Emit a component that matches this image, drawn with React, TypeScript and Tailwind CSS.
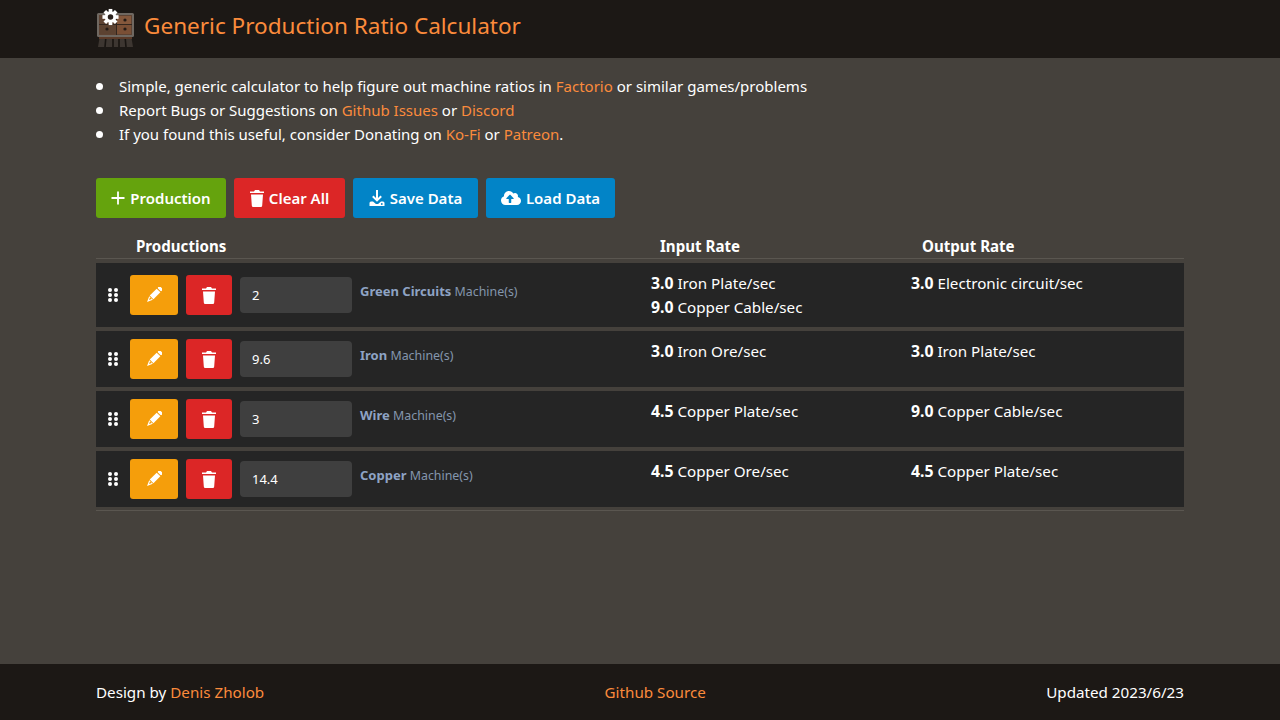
import { FaCloudUploadAlt } from "react-icons/fa";

const rows = [
  {
    name: "Green Circuits",
    count: "2",
    inputs: [["3.0", "Iron Plate"], ["9.0", "Copper Cable"]],
    outputs: [["3.0", "Electronic circuit"]],
  },
  { name: "Iron", count: "9.6", inputs: [["3.0", "Iron Ore"]], outputs: [["3.0", "Iron Plate"]] },
  { name: "Wire", count: "3", inputs: [["4.5", "Copper Plate"]], outputs: [["9.0", "Copper Cable"]] },
  { name: "Copper", count: "14.4", inputs: [["4.5", "Copper Ore"]], outputs: [["4.5", "Copper Plate"]] },
];

function Link({ children }: { children: string }) {
  return <a className="text-[#fb8b3c]">{children}</a>;
}

// rusty machine with a gear in its corner
function Logo() {
  const teeth = [0, 45, 90, 135];
  return (
    <svg width="39" height="37" viewBox="0 0 39 37" className="block overflow-visible">
      <path d="M4 24h31l2 12H2z" fill="#3d3631" />
      <path d="M10 25L9 36M17 25v11M23 25v11M29 25l1 11" stroke="#181411" strokeWidth="1.6" />
      <path d="M3 27h33" stroke="#5b3a28" strokeWidth="2" />
      <rect x="1" y="2" width="37" height="24" rx="1.5" fill="#6f6861" />
      <rect x="3" y="4" width="33" height="20" fill="#5e4333" />
      <rect x="21" y="5" width="14" height="8" fill="#85583c" />
      <rect x="4" y="14" width="16" height="9" fill="#5c4231" />
      <rect x="21" y="14" width="14" height="9" fill="#7a4f35" />
      <path d="M3 13.5h33M20.5 4v20" stroke="#33261e" strokeWidth="1" />
      <circle cx="11" cy="18" r="1.6" fill="#241b16" />
      <circle cx="29" cy="18" r="1.6" fill="#241b16" />
      <circle cx="29" cy="9" r="1.6" fill="#241b16" />
      <g transform="translate(14.5 6) scale(1.15)">
        {teeth.map((deg) => (
          <rect key={deg} x="-1.6" y="-7" width="3.2" height="14" fill="#fff" transform={`rotate(${deg})`} />
        ))}
        <circle r="5" fill="#fff" />
        <circle r="2.4" fill="#2a211c" />
      </g>
    </svg>
  );
}

function TrashIcon() {
  return (
    <svg width="14" height="17" viewBox="0 0 14 17" fill="currentColor">
      <path d="M5 0h4l1 1.5h4V3H0V1.5h4z" />
      <path d="M1 4.5h12l-.8 11a1.5 1.5 0 0 1-1.5 1.5H3.3a1.5 1.5 0 0 1-1.5-1.5z" />
    </svg>
  );
}

function PlusIcon() {
  return (
    <svg width="14" height="14" viewBox="0 0 14 14" stroke="currentColor" strokeWidth="1.8">
      <path d="M7 0.5v13M0.5 7h13" />
    </svg>
  );
}

function SaveIcon() {
  return (
    <svg width="16" height="16" viewBox="0 0 16 16" fill="none" stroke="currentColor" strokeWidth="2">
      <path d="M8 0v10M3.8 6.2L8 10.4L12.2 6.2" />
      <path d="M0.5 13a1.5 1.5 0 0 1 1.5-1.5h2l3 2.5h2l3-2.5h2a1.5 1.5 0 0 1 1.5 1.5v3H0.5z" fill="currentColor" stroke="none" />
      <circle cx="12.8" cy="14" r="0.9" fill="#0284c7" stroke="none" />
    </svg>
  );
}

function PencilIcon() {
  return (
    <svg width="16" height="16" viewBox="0 0 16 16" fill="currentColor">
      <g transform="rotate(45 8 8)">
        <rect x="5.4" y="-2.4" width="5.2" height="3" rx="1.2" />
        <path d="M5.4 1.6h5.2v9.8H5.4z" />
        <path d="M5.4 12.2h5.2L8 17.8z" />
        <path d="M6.8 12.4h2.4L8 15z" fill="#f59e0b" />
      </g>
    </svg>
  );
}

function GripIcon() {
  return (
    <svg width="10" height="14" viewBox="0 0 10 14" fill="currentColor" className="shrink-0">
      {[2, 7, 12].map((y) => (
        <g key={y}>
          <circle cx="2" cy={y} r="2" />
          <circle cx="8" cy={y} r="2" />
        </g>
      ))}
    </svg>
  );
}

function Bullet({ children }: { children: React.ReactNode }) {
  return (
    <li className="flex items-center">
      <span className="mr-4 h-[7px] w-[7px] shrink-0 rounded-full bg-white" />
      <span>{children}</span>
    </li>
  );
}

function Rate({ items }: { items: string[][] }) {
  return (
    <div className="w-[260px] shrink-0">
      {items.map(([value, label]) => (
        <div key={label} className="text-[15.2px] leading-6 text-white">
          <b className="text-[15.8px] font-bold">{value}</b> {label}/sec
        </div>
      ))}
    </div>
  );
}

export default function App() {
  return (
    <div className="flex min-h-screen flex-col bg-[#45413c] font-['Noto_Sans',sans-serif] text-[15px] text-white">
      <header className="flex h-[58px] items-center bg-[#1c1815] px-24">
        <Logo />
        <h1 className="mb-[6px] ml-[9px] text-[22.55px] leading-8 text-[#fb8b3c]">Generic Production Ratio Calculator</h1>
      </header>

      <main className="flex-1 px-24 pt-4">
        <ul className="leading-6">
          <Bullet>
            Simple, generic calculator to help figure out machine ratios in <Link>Factorio</Link> or similar games/problems
          </Bullet>
          <Bullet>
            Report Bugs or Suggestions on <Link>Github Issues</Link> or <Link>Discord</Link>
          </Bullet>
          <Bullet>
            If you found this useful, consider Donating on <Link>Ko-Fi</Link> or <Link>Patreon</Link>.
          </Bullet>
        </ul>

        <div className="mt-8 flex gap-2 font-semibold">
          <button type="button" className="flex h-10 w-[130px] items-center justify-center gap-[5px] rounded-[3px] bg-[#65a30d]">
            <PlusIcon /> Production
          </button>
          <button type="button" className="flex h-10 w-[111px] items-center justify-center gap-[5px] rounded-[3px] bg-[#dc2626]">
            <TrashIcon /> Clear All
          </button>
          <button type="button" className="flex h-10 w-[125px] items-center justify-center gap-[5px] rounded-[3px] bg-[#0284c7]">
            <SaveIcon /> Save Data
          </button>
          <button type="button" className="flex h-10 w-[129px] items-center justify-center gap-[5px] rounded-[3px] bg-[#0284c7]">
            <FaCloudUploadAlt className="h-[20px] w-[20px]" /> Load Data
          </button>
        </div>

        <div className="mt-4 flex h-[25px] border-b border-[#5a5650] text-[15.1px] font-bold leading-6">
          <div className="w-[564px] pl-10">Productions</div>
          <div className="w-[262px]">Input Rate</div>
          <div>Output Rate</div>
        </div>

        <div className="mt-1 flex flex-col gap-1 border-b border-[#5a5650] pb-[3px]">
          {rows.map((row) => (
            <div key={row.name} className="flex items-center bg-[#252525] py-2 pl-3">
              <GripIcon />
              <button type="button" className="ml-3 flex h-10 w-12 items-center justify-center rounded-[3px] bg-[#f59e0b]">
                <PencilIcon />
              </button>
              <button type="button" className="ml-2 flex h-10 w-[46px] items-center justify-center rounded-[3px] bg-[#dc2626]">
                <TrashIcon />
              </button>
              <input
                readOnly
                value={row.count}
                className="ml-2 h-9 w-[112px] rounded-[4px] bg-[#3f3f3f] px-3 text-[13px] text-white outline-none"
              />
              <div className="mb-[6px] ml-2 w-[291px] shrink-0 text-[12.4px] text-[#8496ad]">
                <b className="text-[13px] font-bold text-[#8ea3c4]">{row.name}</b> Machine(s)
              </div>
              <div className="flex self-start">
                <Rate items={row.inputs} />
                <Rate items={row.outputs} />
              </div>
            </div>
          ))}
        </div>
      </main>

      <footer className="flex h-14 items-center justify-between bg-[#1c1815] px-24 text-[15.2px]">
        <div>
          Design by <Link>Denis Zholob</Link>
        </div>
        <Link>Github Source</Link>
        <div>Updated 2023/6/23</div>
      </footer>
    </div>
  );
}
